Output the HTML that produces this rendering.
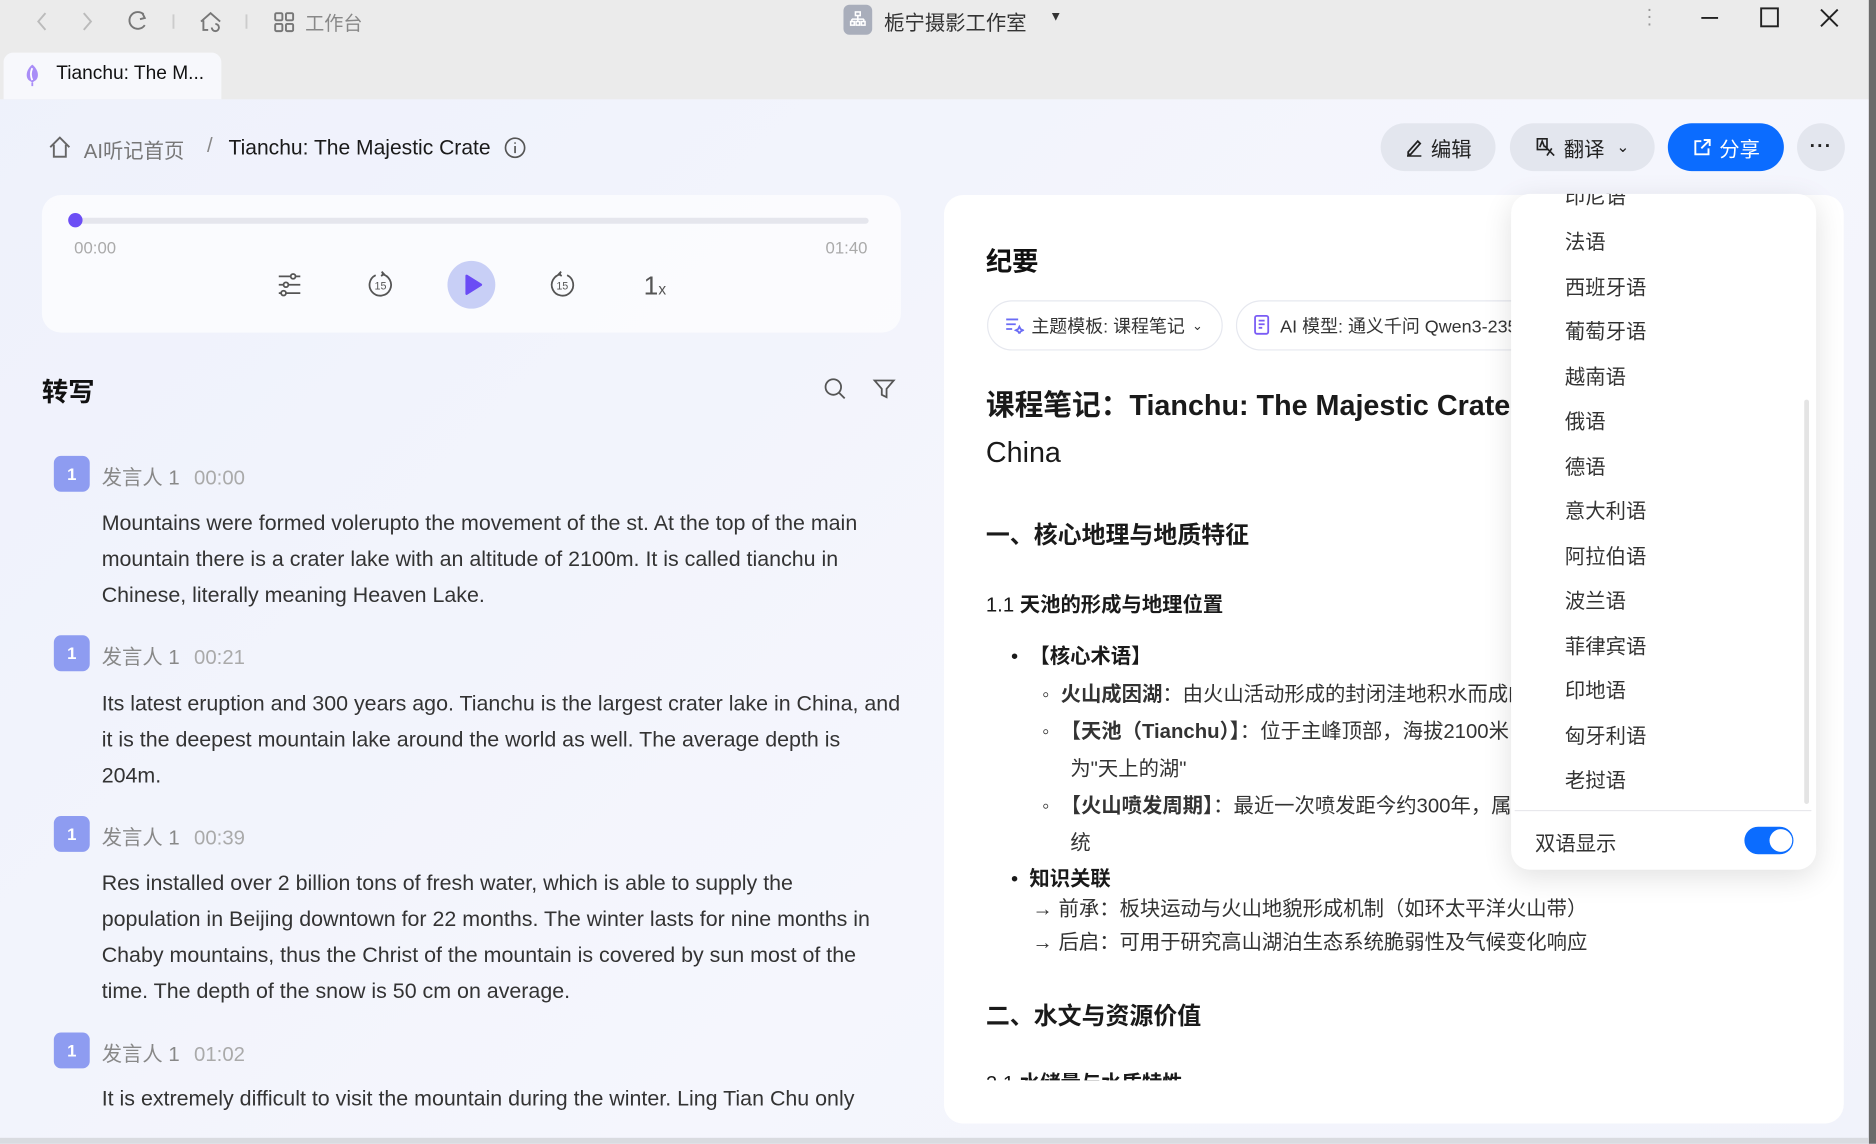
<!DOCTYPE html>
<html><head><meta charset="utf-8"><style>
*{box-sizing:border-box;margin:0;padding:0}
html,body{width:1876px;height:1144px;overflow:hidden;background:#f1f3fb}
body{font-family:"Liberation Sans","Noto Sans CJK SC",sans-serif;color:#222}
#w{position:absolute;left:0;top:0;width:1568px;height:956px;transform:scale(1.19643);transform-origin:0 0;background:linear-gradient(135deg,#eef1fb,#f5f6fd 60%,#f1f3fb)}
.a{position:absolute;white-space:nowrap}
.top{position:absolute;left:0;top:0;width:1568px;height:83px;background:#ebebeb}
.tab{position:absolute;left:3px;top:44px;width:182px;height:39px;background:#f7f8fc;border-radius:8px 8px 0 0}
.btn{position:absolute;top:103px;height:40px;border-radius:20px;background:#e3e6ee;font-size:17px;display:flex;align-items:center;justify-content:center;gap:6px;color:#222}
.card{position:absolute;border-radius:16px}
.badge{position:absolute;left:45px;width:30px;height:30px;border-radius:6px;background:#8e9cf1;color:#fff;font-size:14px;font-weight:bold;text-align:center;line-height:30px}
.sp{position:absolute;left:85px;font-size:17px;color:#888}
.sp span{color:#aaa;margin-left:12px}
.tx{position:absolute;left:85px;white-space:nowrap;font-size:17.9px;line-height:30px;color:#333}
.chip{position:absolute;top:251px;height:42px;border:1px solid #e6e8ef;border-radius:21px;font-size:15px;display:flex;align-items:center;padding-left:14px;gap:6px;color:#333;background:#fff}
.dd{position:absolute;left:1263px;top:162px;width:255px;height:565px;background:#fff;border-radius:16px;box-shadow:0 6px 24px rgba(0,0,0,.12);overflow:hidden}
.dd div.i{position:absolute;left:45px;font-size:17px;color:#333}
</style></head><body><div id="w">
<div class="top"></div>
<svg class="a" style="left:24px;top:8px" width="300" height="20" viewBox="0 0 300 20" fill="none" stroke="#bbb" stroke-width="1.6">
<path d="M14 3 L8 10 L14 17"/><path d="M46 3 L52 10 L46 17"/>
<path d="M96 4 A7 7 0 1 0 97 13" stroke="#777"/><path d="M95 3 L97 7 L93 8" stroke="#777"/>
<path d="M121 4v12" stroke="#ccc"/>
<path d="M144 10 L152 3 L160 10 M146 9v8h4 M156 12a3 3 0 1 1 -3 3" stroke="#777"/>
<path d="M182 4v12" stroke="#ccc"/>
<rect x="206" y="3" width="6" height="6" rx="1" stroke="#777"/><rect x="215" y="3" width="6" height="6" rx="1" stroke="#777"/><rect x="206" y="12" width="6" height="6" rx="1" stroke="#777"/><rect x="215" y="12" width="6" height="6" rx="1" stroke="#777"/>
</svg>
<div class="a" style="left:255px;top:6px;font-size:16px;color:#888">工作台</div>
<div class="a" style="left:705px;top:4px;width:24px;height:25px;border-radius:5px;background:#a9aebb"></div>
<svg class="a" style="left:710px;top:9px" width="14" height="14" fill="none" stroke="#fff" stroke-width="1.3"><rect x="5" y="1" width="4" height="3"/><path d="M7 4v3M2 7h10M2 7v2M7 7v2M12 7v2"/><rect x="1" y="9" width="3" height="3"/><rect x="5.5" y="9" width="3" height="3"/><rect x="10" y="9" width="3" height="3"/></svg>
<div class="a" style="left:739px;top:5px;font-size:17px;color:#333">栀宁摄影工作室</div>
<div class="a" style="left:877px;top:8px;font-size:11px;color:#333">▼</div>
<div class="a" style="left:1376px;top:6px;font-size:16px;color:#999;line-height:6px">·<br>·<br>·</div>
<svg class="a" style="left:1420px;top:5px" width="125" height="22" fill="none" stroke="#222" stroke-width="1.6"><path d="M2 10h14"/><rect x="52" y="2" width="14" height="15"/><path d="M102 3l14 14M116 3l-14 14"/></svg>
<div class="a" style="left:1562px;top:0;width:6px;height:956px;background:#6a6a6a"></div>
<div class="tab"></div>
<svg class="a" style="left:18px;top:53px" width="18" height="20"><path d="M9 1 C4 5 3 11 6 14 L9 16 L12 14 C15 11 14 5 9 1Z" fill="#a98df7"/><path d="M9 4 C7 8 8 12 9 14" stroke="#fff" stroke-width="1.5" fill="none"/><path d="M9 16v3" stroke="#a98df7" stroke-width="1.5"/></svg>
<div class="a" style="left:47px;top:53px;font-size:16px;color:#111">Tianchu: The M...</div>

<svg class="a" style="left:40px;top:114px" width="20" height="18" fill="none" stroke="#666" stroke-width="1.6"><path d="M2 9 L10 1 L18 9 M5 7v10h10V7"/></svg>
<div class="a" style="left:70px;top:112px;font-size:17px;color:#777">AI听记首页</div>
<div class="a" style="left:173px;top:112px;font-size:17px;color:#888">/</div>
<div class="a" style="left:191px;top:113px;font-size:17.6px;color:#1a1a1a">Tianchu: The Majestic Crate</div>
<svg class="a" style="left:421px;top:114px" width="19" height="19" fill="none" stroke="#555" stroke-width="1.4"><circle cx="9.5" cy="9.5" r="8"/><path d="M9.5 8v6M9.5 5v1.2"/></svg>

<div class="btn" style="left:1154px;width:96px"><svg width="16" height="16" fill="none" stroke="#222" stroke-width="1.5"><path d="M3 12 L11 3 L13 5 L5 14 L3 14Z M2 15.5h12"/></svg>编辑</div>
<div class="btn" style="left:1262px;width:121px"><svg width="18" height="18" fill="none" stroke="#222" stroke-width="1.4"><path d="M2 2h8v9H2z M4 9l2-5 2 5 M8 8l8 8 M10 16l4-6"/></svg>翻译<span style="font-size:13px;margin-left:4px">⌄</span></div>
<div class="btn" style="left:1394px;width:97px;background:#0b6cff;color:#fff"><svg width="17" height="17" fill="none" stroke="#fff" stroke-width="1.6"><path d="M8 3H3v11h11V9 M10 2h5v5 M15 2L8 9"/></svg>分享</div>
<div class="btn" style="left:1502px;width:40px;font-size:16px;font-weight:bold;letter-spacing:1px">···</div>

<div class="card" style="left:35px;top:163px;width:718px;height:115px;background:rgba(255,255,255,.65)"></div>
<div class="a" style="left:62px;top:182px;width:664px;height:5px;border-radius:3px;background:#e5e6ed"></div>
<div class="a" style="left:57px;top:178px;width:12px;height:12px;border-radius:50%;background:#6c4ef5"></div>
<div class="a" style="left:62px;top:199px;font-size:14px;color:#aaa">00:00</div>
<div class="a" style="left:690px;top:199px;font-size:14px;color:#aaa">01:40</div>
<svg class="a" style="left:230px;top:226px" width="24" height="24" fill="none" stroke="#555" stroke-width="1.5"><path d="M3 5h18M3 12h18M3 19h18"/><circle cx="15" cy="5" r="2" fill="#fff"/><circle cx="9" cy="12" r="2" fill="#fff"/><circle cx="7" cy="19" r="2" fill="#fff"/></svg>
<svg class="a" style="left:306px;top:226px" width="24" height="24" fill="none" stroke="#555" stroke-width="1.5"><path d="M8 4 A9 9 0 1 0 13 3.2"/><path d="M13 1l2 2.2-2.5 1.5"/><text x="12" y="16" font-size="9" text-anchor="middle" fill="#555" stroke="none" font-family="Liberation Sans">15</text></svg>
<div class="a" style="left:374px;top:218px;width:40px;height:40px;border-radius:50%;background:#c8cff6"></div>
<svg class="a" style="left:388px;top:229px" width="16" height="18"><path d="M2 1.5 L14 9 L2 16.5Z" fill="#6b4cf5" stroke="#6b4cf5" stroke-linejoin="round" stroke-width="2"/></svg>
<svg class="a" style="left:458px;top:226px" width="24" height="24" fill="none" stroke="#555" stroke-width="1.5"><path d="M16 4 A9 9 0 1 1 11 3.2"/><path d="M11 1l-2 2.2 2.5 1.5"/><text x="12" y="16" font-size="9" text-anchor="middle" fill="#555" stroke="none" font-family="Liberation Sans">15</text></svg>
<div class="a" style="left:538px;top:226px;font-size:22px;color:#555">1<span style="font-size:13px">x</span></div>

<div class="a" style="left:35px;top:310px;font-size:22px;font-weight:bold;color:#111">转写</div>
<svg class="a" style="left:688px;top:315px" width="20" height="20" fill="none" stroke="#555" stroke-width="1.5"><circle cx="8.5" cy="8.5" r="6.5"/><path d="M13.5 13.5L18 18"/></svg>
<svg class="a" style="left:729px;top:315px" width="20" height="20" fill="none" stroke="#555" stroke-width="1.5"><path d="M2 3h16l-6 7v7l-4-2v-5Z"/></svg>

<div class="badge" style="top:381px">1</div><div class="sp" style="top:385px">发言人 1<span>00:00</span></div>
<div class="tx" style="top:422px">Mountains were formed volerupto the movement of the st. At the top of the main<br>mountain there is a crater lake with an altitude of 2100m. It is called tianchu in<br>Chinese, literally meaning Heaven Lake.</div>
<div class="badge" style="top:531px">1</div><div class="sp" style="top:535px">发言人 1<span>00:21</span></div>
<div class="tx" style="top:573px">Its latest eruption and 300 years ago. Tianchu is the largest crater lake in China, and<br>it is the deepest mountain lake around the world as well. The average depth is<br>204m.</div>
<div class="badge" style="top:682px">1</div><div class="sp" style="top:686px">发言人 1<span>00:39</span></div>
<div class="tx" style="top:723px">Res installed over 2 billion tons of fresh water, which is able to supply the<br>population in Beijing downtown for 22 months. The winter lasts for nine months in<br>Chaby mountains, thus the Christ of the mountain is covered by sun most of the<br>time. The depth of the snow is 50 cm on average.</div>
<div class="badge" style="top:863px">1</div><div class="sp" style="top:867px">发言人 1<span>01:02</span></div>
<div class="tx" style="top:903px">It is extremely difficult to visit the mountain during the winter. Ling Tian Chu only</div>

<div class="card" style="left:789px;top:163px;width:752px;height:776px;background:#fff;overflow:hidden">
<div class="a" style="left:35px;top:38px;font-size:22px;font-weight:bold;color:#111">纪要</div>
<div class="chip" style="left:36px;width:197px;top:88px"><svg width="16" height="14" fill="none" stroke="#6b6cf5" stroke-width="1.5"><path d="M1 2h10M1 6h8M1 10h5M12 8l1 2 2 1-2 1-1 2-1-2-2-1 2-1z"/></svg>主题模板: 课程笔记 <span style="font-size:11px">⌄</span></div>
<div class="chip" style="left:244px;width:300px;top:88px"><svg width="16" height="18" fill="none" stroke="#7a5cf5" stroke-width="1.5"><rect x="1" y="1" width="11" height="15" rx="1.5"/><path d="M4 5h5M4 8h5M4 11h3"/></svg>AI 模型: 通义千问 Qwen3-235</div>
<div class="a" style="left:35px;top:157px;font-size:24px;font-weight:bold;color:#1a1a1a;line-height:39px">课程笔记：<span style="font-weight:600">Tianchu: The Majestic Crater Lake of</span><br><span style="font-weight:normal">China</span></div>
<div class="a" style="left:35px;top:268px;font-size:20px;font-weight:bold;color:#1a1a1a">一、核心地理与地质特征</div>
<div class="a" style="left:35px;top:328px;font-size:17px;color:#1a1a1a">1.1 <b>天池的形成与地理位置</b></div>
<div class="a" style="left:56px;top:371px;font-size:17px;color:#1a1a1a">•&nbsp;&nbsp;<b>【核心术语】</b></div>
<div class="a" style="left:82px;top:402px;font-size:17px;color:#333;line-height:31px">◦&nbsp;&nbsp;<b>火山成因湖</b>：由火山活动形成的封闭洼地积水而成的湖泊<br>◦&nbsp;&nbsp;<b>【天池（Tianchu）】</b>：位于主峰顶部，海拔2100米，中文意<br>&nbsp;&nbsp;&nbsp;&nbsp;&nbsp;为"天上的湖"<br>◦&nbsp;&nbsp;<b>【火山喷发周期】</b>：最近一次喷发距今约300年，属于活火山系<br>&nbsp;&nbsp;&nbsp;&nbsp;&nbsp;统</div>
<div class="a" style="left:56px;top:557px;font-size:17px;color:#1a1a1a">•&nbsp;&nbsp;<b>知识关联</b></div>
<div class="a" style="left:74px;top:583px;font-size:17px;color:#333;line-height:28px">→ 前承：板块运动与火山地貌形成机制（如环太平洋火山带）<br>→ 后启：可用于研究高山湖泊生态系统脆弱性及气候变化响应</div>
<div class="a" style="left:35px;top:670px;font-size:20px;font-weight:bold;color:#1a1a1a">二、水文与资源价值</div>
<div class="a" style="left:35px;top:728px;font-size:17px;color:#1a1a1a">2.1 <b>水储量与水质特性</b></div>
</div>
<div class="a" style="left:789px;top:903px;width:752px;height:36px;background:#fff;border-radius:0 0 16px 16px"></div>

<div class="dd">
<div class="i" style="top:-12px">印尼语</div>
<div class="i" style="top:26px">法语</div>
<div class="i" style="top:64px">西班牙语</div>
<div class="i" style="top:101px">葡萄牙语</div>
<div class="i" style="top:139px">越南语</div>
<div class="i" style="top:176px">俄语</div>
<div class="i" style="top:214px">德语</div>
<div class="i" style="top:251px">意大利语</div>
<div class="i" style="top:289px">阿拉伯语</div>
<div class="i" style="top:326px">波兰语</div>
<div class="i" style="top:364px">菲律宾语</div>
<div class="i" style="top:401px">印地语</div>
<div class="i" style="top:439px">匈牙利语</div>
<div class="i" style="top:476px">老挝语</div>
<div class="a" style="left:245px;top:172px;width:4px;height:338px;border-radius:2px;background:#e4e4e4"></div>
<div class="a" style="left:3px;top:515px;width:248px;height:1px;background:#e8e8ec"></div>
<div class="a" style="left:20px;top:529px;font-size:17px;color:#333">双语显示</div>
<div class="a" style="left:195px;top:529px;width:41px;height:23px;border-radius:12px;background:#0b6cff"></div>
<div class="a" style="left:216px;top:531px;width:19px;height:19px;border-radius:50%;background:#fff"></div>
</div>
<div class="a" style="left:0;top:951px;width:1562px;height:5px;background:#d9dbe0"></div>
</div></body></html>
